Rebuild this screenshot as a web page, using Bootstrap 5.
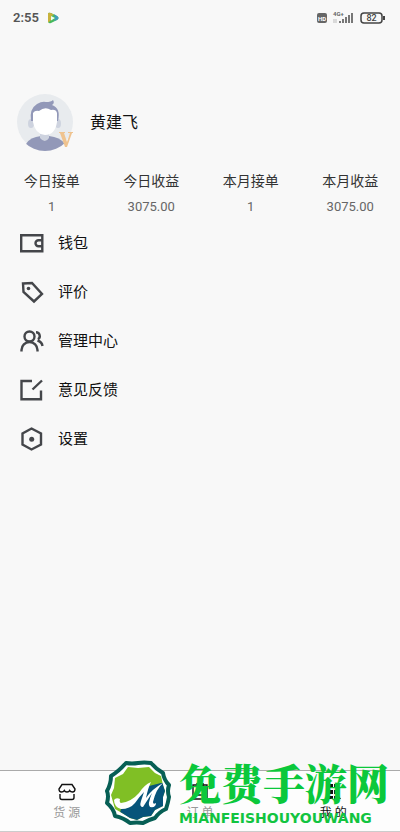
<!DOCTYPE html>
<html lang="zh-CN">
<head>
<meta charset="utf-8">
<meta name="viewport" content="width=device-width, initial-scale=1">
<title>我的</title>
<link href="https://cdn.jsdelivr.net/npm/bootstrap@5.3.0/dist/css/bootstrap.min.css" rel="stylesheet">
<style>
body { background: #f8f8f8; color: #111; font-family: Roboto, "Noto Sans CJK SC", sans-serif; font-size: 15px; }
svg { display: block; flex: none; }
.status-bar { height: 36px; padding: 0 14px 0 13px; color: #555; }
.clock { font-size: 13px; line-height: 20px; font-weight: 600; }
.profile { padding: 57px 15px 0; gap: 15px; }
.profile-name { font-size: 16px; line-height: 24px; font-weight: 400; }
.stats { padding: 0 0 1px 2px; }
.stat-label { font-size: 14px; line-height: 24px; color: #333; }
.stat-value { font-size: 13px; line-height: 20px; color: #666; margin-top: 4px; }
.menu-row { height: 49px; padding: 0 19px; gap: 13px; color: #111; line-height: 24px; }
.line-icon { fill: none; stroke: #44464a; stroke-width: 2.4; }
.tab-bar { height: 62px; background: #fdfdfd; border-top: 1px solid #aaa; border-bottom: 1px solid #ccc; }
.tab-item { color: #999; font-size: 12px; line-height: 18px; padding-top: 11px; gap: 3px; }
.tab-item.active { color: #111; }
.brand-mark { left: 103px; bottom: 4px; gap: 6px; pointer-events: none; }
.brand-title { font-family: "Noto Serif CJK SC", "Noto Sans CJK SC", serif; font-weight: 900; font-size: 42px; line-height: 44px; color: #0bc83b; }
.brand-latin { font-family: "DejaVu Sans", sans-serif; font-weight: 700; font-size: 14px; line-height: 20px; margin-top: 4px; color: #12c440; }
</style>
<script src="https://cdn.jsdelivr.net/npm/bootstrap@5.3.0/dist/js/bootstrap.bundle.min.js"></script>
</head>
<body>
<div class="d-flex flex-column min-vh-100">
  <header class="status-bar d-flex align-items-center justify-content-between">
    <div class="d-flex align-items-center gap-2">
      <span class="clock">2:55</span>
      <svg width="12" height="12" viewBox="0 0 12 12"><path d="M1 2Q1 0 4 1L10 4Q13 6 10 8L4 11Q1 12 1 9Z" fill="#46b95c"/><path d="M1 2Q1 0 4 1L7 3 4 4V8L2 10Q1 11 1 9Z" fill="#c9b23c"/><path d="M7 2 10 4Q13 6 10 8L7 9 8 6Z" fill="#3f9dbc"/><path d="M4 4 8 6 4 8.500Z" fill="#f2fff0"/></svg>
    </div>
    <svg width="70" height="14" viewBox="0 0 70 14" font-family="Roboto, sans-serif" fill="#666">
      <rect x="1" y="2" width="10" height="10" rx="2"/><text x="2" y="9.500" font-size="6" font-weight="700" fill="#fff">HD</text>
      <text x="17" y="5" font-size="6" font-weight="700">4G+</text>
      <path d="M18 8v4M20 8v4" stroke="#bbb"/>
      <path d="M24 10v2M27 8v4M30 6v6M33 4v8M36 2v10" stroke="#777" stroke-width="2"/>
      <rect x="45" y="2" width="21" height="10" rx="3" fill="none" stroke="#444" stroke-width="1.500"/><path d="M67 5h2v4h-2z" fill="#444"/>
      <text x="55.500" y="10.300" font-size="9" font-weight="500" text-anchor="middle" fill="#444">82</text>
    </svg>
  </header>

  <main class="flex-grow-1">
    <section class="profile d-flex align-items-center">
      <svg width="60" height="60" viewBox="0 0 60 60" role="img" aria-label="头像">
        <defs><clipPath id="disc"><circle cx="30" cy="29" r="29"/></clipPath></defs>
        <circle cx="30" cy="29" r="28" fill="#e8ebee"/>
        <g clip-path="url(#disc)">
          <path d="M11 51Q15 44 26 43H34Q45 44 50 51V60H11Z" fill="#9298b8"/>
          <path d="M25 41h9v4q-4 6-9 0z" fill="#ced3df"/>
        </g>
        <ellipse cx="16" cy="30.500" rx="3" ry="4.500" fill="#ced3df"/><ellipse cx="43" cy="30.500" rx="3" ry="4.500" fill="#ced3df"/>
        <path d="M18 28H16Q14 16 22 11Q27 8 31 9Q36 9 38 7Q40 10 37 12Q46 15 43 28H41L38 19H21Z" fill="#9298b8"/>
        <path d="M18 20Q20 17 24 18Q30 13 36 17Q41 16 42 20V29Q40 42 30 42Q20 41 18 29Z" fill="#fff"/>
        <path d="M44 39h6v1h-1l3 9 3-9h-2v-1h5v1h-1l-5 14h-2l-5-14h-1z" fill="#efc38f"/>
      </svg>
      <h1 class="profile-name mb-0">黄建飞</h1>
    </section>

    <section class="stats row g-0 text-center mt-3">
      <div class="col"><div class="stat-label">今日接单</div><div class="stat-value">1</div></div>
      <div class="col"><div class="stat-label">今日收益</div><div class="stat-value">3075.00</div></div>
      <div class="col"><div class="stat-label">本月接单</div><div class="stat-value">1</div></div>
      <div class="col"><div class="stat-label">本月收益</div><div class="stat-value">3075.00</div></div>
    </section>

    <nav class="d-flex flex-column" aria-label="菜单">
      <a href="#" class="menu-row d-flex align-items-center text-decoration-none">
        <svg class="line-icon" width="26" height="26" viewBox="0 0 26 26"><path d="M2.200 5.200H23.300V21.200H2.200ZM23 10.200H19.500a3 3 0 0 0 0 6H23"/></svg>钱包</a>
      <a href="#" class="menu-row d-flex align-items-center text-decoration-none">
        <svg class="line-icon" width="26" height="26" viewBox="0 0 26 26"><path d="M4 4.500 13 4 23 15 15 22.500 4.500 13Z"/><circle cx="9.500" cy="9.500" r="1.800" fill="#44464a" stroke="none"/></svg>评价</a>
      <a href="#" class="menu-row d-flex align-items-center text-decoration-none">
        <svg class="line-icon" width="26" height="26" viewBox="0 0 26 26"><circle cx="10.500" cy="8.500" r="5"/><path d="M2.500 23.500V22a8 8 0 0 1 16 0V23.500M17 4.200a3.800 3.800 0 0 1 2 7M18.500 12.500Q23 14 23.500 18"/></svg>管理中心</a>
      <a href="#" class="menu-row d-flex align-items-center text-decoration-none">
        <svg class="line-icon" width="26" height="26" viewBox="0 0 26 26"><path d="M13 4H2.500V22.200H22V13.500M13.500 12.500 23 3.500"/></svg>意见反馈</a>
      <a href="#" class="menu-row d-flex align-items-center text-decoration-none">
        <svg class="line-icon" width="26" height="26" viewBox="0 0 26 26"><path d="M12.500 2.500 22 7.500V18.500L12.500 23.500 3.500 18.500V7.500Z"/><circle cx="12.700" cy="13.200" r="2.500" fill="#44464a" stroke="none"/></svg>设置</a>
    </nav>
  </main>

  <footer class="position-relative">
    <nav class="tab-bar row g-0" aria-label="底部导航">
      <a href="#" class="tab-item col d-flex flex-column align-items-center text-decoration-none">
        <svg width="20" height="19" viewBox="0 0 20 19" fill="none" stroke="#111" stroke-width="1.400"><path d="M5 2.500H15L18 7Q18 10 15.500 10Q13.500 10 12.700 8.500 12 10 10 10T7.300 8.500Q6.500 10 4.500 10 2 10 2 7ZM3 12V15.500Q3 17.500 5 17.500H15Q17 17.500 17 15.500V12"/></svg>
        <span>货 源</span></a>
      <a href="#" class="tab-item col d-flex flex-column align-items-center text-decoration-none">
        <svg width="20" height="19" viewBox="0 0 20 19" fill="none" stroke="#111" stroke-width="1.400"><path d="M3 3H17V17H3ZM7 1V5M13 1V5M6 13H12"/></svg>
        <span>订 单</span></a>
      <a href="#" class="tab-item active col d-flex flex-column align-items-center text-decoration-none" aria-current="page">
        <svg width="20" height="19" viewBox="0 0 20 19" fill="#111"><path d="M5 2h5v4H5zM11 2h5v4h-5zM5 8h5v4H5zM11 8h5v4h-5zM4 14h6v3H4zM11 14h5l2 3h-7z"/></svg>
        <span>我 的</span></a>
    </nav>
    <div class="brand-mark position-absolute d-flex align-items-center text-nowrap">
      <svg width="70" height="68" viewBox="0 0 70 68">
        <defs><clipPath id="seal"><path d="M25 7 35 8 46 7 52 13 58 16 60 25 62 31 60 37 60 46 52 50 48 56 40 57 34 60 27 58 19 53 12 49 10 42 8 35 11 28 12 18 20 14Z"/></clipPath></defs>
        <path d="M23 3Q29 4 35 3Q41 2 48 3Q53 9 60 13Q61 20 66 25Q64 31 66 37Q65 43 63 49Q56 52 52 58Q45 60 40 63Q34 62 27 63Q21 58 12 56Q11 49 4 43Q6 36 4 31Q8 24 8 16Q15 12 23 3Z" fill="#fff" stroke="#075f55" stroke-width="4" stroke-linejoin="round"/>
        <g clip-path="url(#seal)"><path d="M6 4H66V64H6Z" fill="#80bf25"/><path d="M18 49Q28 47 34 38L46 26 58 23H66V64H14Z" fill="#07547a"/></g>
        <path d="M11 40Q13 37 17 39Q16 42 18 43Q28 42 36 33Q41 25 48 22Q45 28 43 38Q49 29 60 23Q53 29 50 42Q50 45 53 43Q53 48 47 47Q44 45 49 33L40 47Q36 47 38 41L41 32Q36 37 32 43Q27 49 18 49Q11 47 11 40Z" fill="#fff"/>
      </svg>
      <div><div class="brand-title">免费手游网</div><div class="brand-latin">MIANFEISHOUYOUWANG</div></div>
    </div>
  </footer>
</div>
</body>
</html>
